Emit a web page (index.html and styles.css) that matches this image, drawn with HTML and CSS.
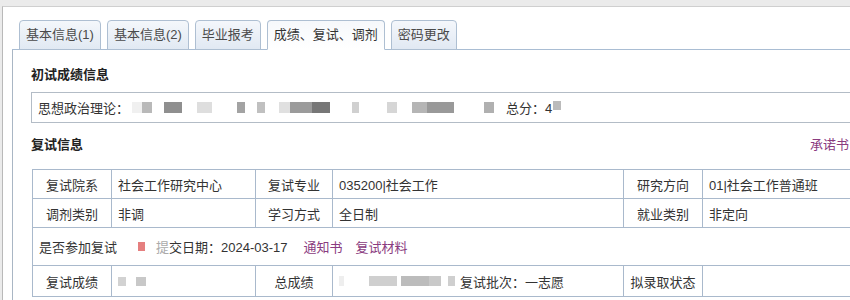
FILE: index.html
```html
<!DOCTYPE html>
<html lang="zh-CN">
<head>
<meta charset="utf-8">
<title>成绩、复试、调剂</title>
<link rel="stylesheet" href="styles.css">
</head>
<body>
<div class="frame">
  <div class="tabs">
    <div class="tab">基本信息(1)</div>
    <div class="tab">基本信息(2)</div>
    <div class="tab">毕业报考</div>
    <div class="tab active">成绩、复试、调剂</div>
    <div class="tab">密码更改</div>
  </div>
  <div class="panel">
    <div class="sec-title">初试成绩信息</div>
    <div class="score-box">
      <span>思想政治理论：</span>
      <span class="mosaic mz-score"></span>
      <span>总分：4</span>
      <span class="mosaic mz-total"></span>
    </div>
    <div class="sec-head">
      <span class="sec-title">复试信息</span>
      <a class="link" href="#">承诺书</a>
    </div>
    <table class="info">
      <colgroup>
        <col class="c-l1"><col class="c-v1"><col class="c-l2"><col class="c-v2"><col class="c-l3"><col class="c-v3">
      </colgroup>
      <tr class="r-std">
        <td class="lbl">复试院系</td><td>社会工作研究中心</td>
        <td class="lbl">复试专业</td><td>035200|社会工作</td>
        <td class="lbl">研究方向</td><td>01|社会工作普通班</td>
      </tr>
      <tr class="r-std">
        <td class="lbl">调剂类别</td><td>非调</td>
        <td class="lbl">学习方式</td><td>全日制</td>
        <td class="lbl">就业类别</td><td>非定向</td>
      </tr>
      <tr class="r-mid">
        <td colspan="6">
          <div class="attend">
            <span>是否参加复试</span>
            <span class="flag"></span>
            <span class="blurch">提</span><span>交日期：2024-03-17</span>
            <a class="link gap" href="#">通知书</a>
            <a class="link gap" href="#">复试材料</a>
          </div>
        </td>
      </tr>
      <tr class="r-last">
        <td class="lbl">复试成绩</td><td><span class="mosaic mz-fs"></span></td>
        <td class="lbl">总成绩</td><td><div class="cell-flex"><span class="mosaic mz-zc"></span><span>复试批次：一志愿</span></div></td>
        <td class="lbl">拟录取状态</td><td></td>
      </tr>
    </table>
  </div>
</div>
</body>
</html>
```

FILE: styles.css
```css
html, body {
  margin: 0;
  padding: 0;
}
body {
  width: 850px;
  height: 300px;
  overflow: hidden;
  background: #ebebeb;
  font-family: "Liberation Sans", "Noto Sans CJK SC", sans-serif;
  font-size: 13px;
  color: #333;
  padding-top: 6px;
  padding-left: 2px;
  box-sizing: border-box;
}
.frame {
  width: 848px;
  height: 294px;
  overflow: hidden;
  background: #fff;
  border-left: 1px solid #b9b9b9;
  border-top: 1px solid #cfcfcf;
  padding: 13px 0 0 9px;
  box-sizing: border-box;
}
.tabs {
  display: flex;
  gap: 6px;
  padding-left: 7px;
  border-bottom: 1px solid #a9bdd3;
  height: 30px;
  box-sizing: border-box;
}
.tab {
  height: 30px;
  box-sizing: border-box;
  padding: 0 6px;
  line-height: 28px;
  border: 1px solid #aebfd2;
  border-radius: 4px 4px 0 0;
  background: linear-gradient(#f4f7fb, #e1e9f3);
  color: #4a4a4a;
  white-space: nowrap;
}
.tab.active {
  background: linear-gradient(#f6f8fb, #fff);
  border-bottom-color: #fff;
  color: #333;
}
.panel {
  border-left: 1px solid #a9b6c4;
  height: 260px;
  padding: 17px 0 0 18px;
  box-sizing: border-box;
  width: 840px;
  overflow: hidden;
}
.sec-title {
  font-weight: bold;
  line-height: 16px;
  color: #222;
}
.score-box {
  margin-top: 9px;
  height: 31px;
  width: 830px;
  box-sizing: border-box;
  border: 1px solid #b3bcc6;
  border-right: none;
  padding-left: 6px;
  display: flex;
  align-items: center;
  color: #333;
}
.mosaic {
  display: inline-block;
  height: 11px;
}
.mz-score {
  width: 368px;
  margin: 0 6px 0 3px;
  background: linear-gradient(90deg,
    #f0f0f0 0 10px, #b9b9b9 10px 20px, #fff 20px 32px, #8f8f8f 32px 50px, #fff 50px 65px,
    #dedede 65px 80px, #fff 80px 105px, #a3a3a3 105px 113px, #fff 113px 125px, #c0c0c0 125px 133px,
    #fff 133px 147px, #e0e0e0 147px 158px, #9b9b9b 158px 180px, #777 180px 198px, #fff 198px 220px,
    #d0d0d0 220px 227px, #fff 227px 255px, #d6d6d6 255px 265px, #fff 265px 280px, #b5b5b5 280px 295px,
    #999 295px 322px, #fff 322px 352px, #b0b0b0 352px 362px, #fff 362px 368px);
}
.mz-total {
  width: 8px;
  margin-left: 1px;
  background: #bbb;
  height: 9px;
  align-self: flex-start;
  margin-top: 8px;
}
.sec-head {
  margin-top: 14px;
  margin-bottom: 16px;
  display: flex;
  justify-content: space-between;
  align-items: center;
  width: 818px;
  line-height: 16px;
}
.link {
  color: #8a3b80;
  text-decoration: none;
  font-weight: normal;
}
.info {
  margin-left: 1px;
  border-collapse: collapse;
  table-layout: fixed;
  width: 825px;
}
.c-l1 { width: 79px; }
.c-v1 { width: 144px; }
.c-l2 { width: 77px; }
.c-v2 { width: 291px; }
.c-l3 { width: 79px; }
.c-v3 { width: 155px; }
.info td {
  border: 1px solid #a9b9cc;
  padding: 0 0 0 6px;
  white-space: nowrap;
  overflow: hidden;
  color: #333;
}
.info td.lbl {
  text-align: center;
  padding: 0;
}
.r-std td { height: 28px; }
.r-mid td { height: 37px; }
.r-last td { height: 30px; }
.attend {
  display: flex;
  align-items: center;
}
.flag {
  display: inline-block;
  width: 7px;
  height: 9px;
  background: #e57f7f;
  margin: 0 11px 0 21px;
}
.blurch {
  color: #aaa;
}
.gap {
  margin-left: 16px;
}
.gap + .gap {
  margin-left: 13px;
}
.mz-fs {
  width: 30px;
  height: 9px;
  background: linear-gradient(90deg, #d2d2d2 0 8px, #fff 8px 18px, #c8c8c8 18px 28px, #fff 28px);
}
.cell-flex {
  display: flex;
  align-items: center;
}
.mz-zc {
  width: 121px;
  height: 10px;
  background: linear-gradient(90deg,
    #eee 0 5px, #fff 5px 30px, #cfcfcf 30px 58px, #fff 58px 62px, #bcbcbc 62px 90px,
    #c9c9c9 90px 102px, #fff 102px 109px, #cfcfcf 109px 116px, #fff 116px);
}
```
